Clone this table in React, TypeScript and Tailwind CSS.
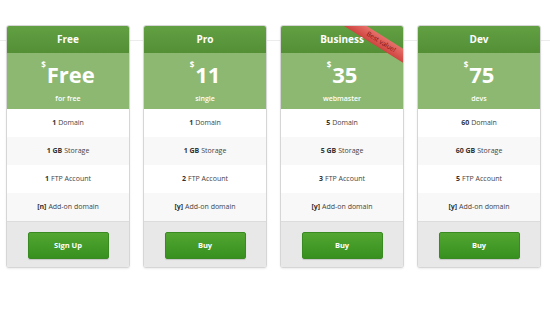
import React from "react";

type Plan = {
  name: string;
  price: string;
  sub: string;
  features: [string, string][];
  cta: string;
  ribbon?: boolean;
};

const plans: Plan[] = [
  {
    name: "Free",
    price: "Free",
    sub: "for free",
    features: [["1", "Domain"], ["1 GB", "Storage"], ["1", "FTP Account"], ["[n]", "Add-on domain"]],
    cta: "Sign Up",
  },
  {
    name: "Pro",
    price: "11",
    sub: "single",
    features: [["1", "Domain"], ["1 GB", "Storage"], ["2", "FTP Account"], ["[y]", "Add-on domain"]],
    cta: "Buy",
  },
  {
    name: "Business",
    price: "35",
    sub: "webmaster",
    features: [["5", "Domain"], ["5 GB", "Storage"], ["3", "FTP Account"], ["[y]", "Add-on domain"]],
    cta: "Buy",
    ribbon: true,
  },
  {
    name: "Dev",
    price: "75",
    sub: "devs",
    features: [["60", "Domain"], ["60 GB", "Storage"], ["5", "FTP Account"], ["[y]", "Add-on domain"]],
    cta: "Buy",
  },
];

const PlanCard: React.FC<{ plan: Plan }> = ({ plan }) => {
  return (
    <div className="relative w-[124px] rounded-[3px] border border-[#d6d6d6] bg-white shadow-[0_1px_2px_rgba(0,0,0,0.08)]">
      <div className="flex h-[27px] items-center justify-center rounded-t-[2px] bg-gradient-to-b from-[#62a043] to-[#548f36] text-[10px] font-bold text-white">
        {plan.name}
      </div>
      <div className="flex h-[56px] flex-col items-center bg-[#8cb872] text-white">
        <div className="mt-[10px] flex items-start font-bold">
          <span className="mt-[-2px] text-[8px] leading-none">$</span>
          <span className="ml-[1px] text-[22px] leading-[22px]">{plan.price}</span>
        </div>
        <div className="mt-[10px] text-[7px] font-semibold leading-none">{plan.sub}</div>
      </div>
      {plan.features.map(([b, rest], i) => (
        <div
          key={i}
          className={`flex h-[28px] items-center justify-center text-[7px] text-[#444] ${i % 2 === 1 ? "bg-[#f8f8f8]" : "bg-white"}`}
        >
          <span className="font-bold text-[#333]">{b}</span>
          <span className="ml-[2px]">{rest}</span>
        </div>
      ))}
      <div className="flex h-[46px] justify-center rounded-b-[2px] border-t border-[#dcdcdc] bg-[#e8e8e8] pt-[10px]">
        <button className="h-[27px] w-[81px] rounded-[2px] border border-[#3a8a22] bg-gradient-to-b from-[#52a631] to-[#37901e] text-[7.5px] font-bold text-white shadow-[0_1px_1px_rgba(0,0,0,0.15)]">
          {plan.cta}
        </button>
      </div>
      {plan.ribbon && (
        <div className="absolute right-0 top-0 h-[45px] w-[80px] overflow-hidden rounded-tr-[2px]">
          <div className="absolute left-[10px] top-[10px] flex h-[12px] w-[96px] rotate-[32deg] items-center justify-center bg-gradient-to-b from-[#e8706b] to-[#cf4440] text-[6.5px] leading-none text-[#7e1414]">
            Best value!
          </div>
        </div>
      )}
    </div>
  );
};

const App: React.FC = () => {
  return (
    <div className="relative h-[335px] w-[550px] overflow-hidden bg-white font-['Open_Sans',sans-serif]">
      <div className="absolute left-0 right-0 top-[40px] h-px bg-[#ececec]" />
      <div className="relative flex gap-[13px] pl-[6px] pt-[25px]">
        {plans.map((p) => (
          <PlanCard key={p.name} plan={p} />
        ))}
      </div>
    </div>
  );
};

export default App;
